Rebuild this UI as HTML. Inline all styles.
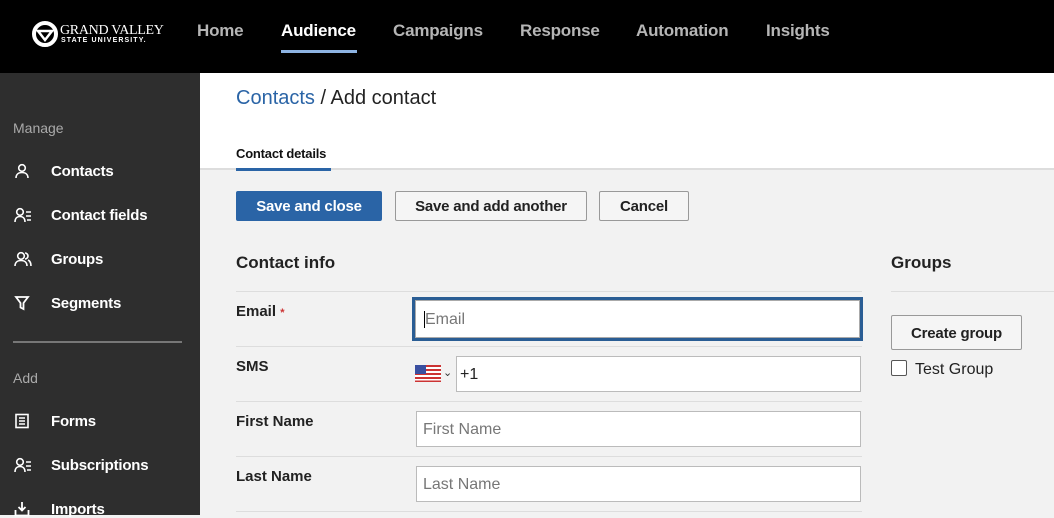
<!DOCTYPE html>
<html><head><style>
*{box-sizing:border-box;margin:0;padding:0}
body{width:1054px;height:515px;overflow:hidden;font-family:"Liberation Sans",sans-serif;background:#f2f2f2;position:relative}
.top{position:absolute;left:0;top:0;width:1054px;height:73px;background:#000}
.nav{position:absolute;top:21px;font-size:17px;font-weight:bold;color:#b5b5b5;letter-spacing:-0.2px}
.side{position:absolute;left:0;top:73px;width:200px;height:442px;background:#2e2e2e;color:#fff}
.sh{position:absolute;left:13px;font-size:14px;color:#aaa}
.si{position:absolute;left:51px;font-size:15px;font-weight:bold;color:#fff;letter-spacing:-0.2px}
.ic{position:absolute;left:14px}
.white{position:absolute;left:200px;top:73px;width:854px;height:97px;background:#fff;border-bottom:2px solid #ddd}
.btn{position:absolute;top:191px;height:30px;border:1px solid #999;border-radius:2px;background:#f5f5f5;font-size:15px;font-weight:bold;color:#222;text-align:center;line-height:30px;letter-spacing:-0.2px}
.lbl{position:absolute;left:236px;font-size:15px;font-weight:bold;color:#222}
.inp{position:absolute;left:416px;width:445px;height:36px;border:1px solid #bbb;background:#fff;font-size:16px;color:#777;padding-left:6px;line-height:36px}
.hr{position:absolute;left:236px;width:626px;height:1px;background:#ddd}
</style></head><body>
<div class="top">
<svg style="position:absolute;left:31px;top:20px" width="28" height="28" viewBox="0 0 28 28"><circle cx="14" cy="14" r="11" fill="none" stroke="#fff" stroke-width="4"/><path d="M7 11h14l-7 9z" fill="none" stroke="#fff" stroke-width="2.5"/></svg>
<div style="position:absolute;left:60px;top:24px;color:#fff;font-family:'Liberation Serif',serif;font-size:14px;line-height:13px;letter-spacing:-0.3px">GRAND VALLEY</div>
<div style="position:absolute;left:61px;top:37px;color:#fff;font-size:7px;letter-spacing:1.1px;font-weight:bold">STATE UNIVERSITY.</div>
<div class="nav" style="left:197px">Home</div>
<div class="nav" style="left:281px;color:#fff">Audience</div>
<div style="position:absolute;left:281px;top:50px;width:76px;height:3px;background:#8eb4e3"></div>
<div class="nav" style="left:393px">Campaigns</div>
<div class="nav" style="left:520px">Response</div>
<div class="nav" style="left:636px">Automation</div>
<div class="nav" style="left:766px">Insights</div>
</div>
<div class="side">
<div class="sh" style="top:47px">Manage</div>
<svg class="ic" style="top:90px" width="16" height="16" viewBox="0 0 16 16" fill="none" stroke="#fff" stroke-width="1.6"><circle cx="8" cy="5" r="3.3"/><path d="M2 15c0-4 3-5.5 6-5.5s6 1.5 6 5.5"/></svg>
<div class="si" style="top:90px">Contacts</div>
<svg class="ic" style="top:134px" width="18" height="16" viewBox="0 0 18 16" fill="none" stroke="#fff" stroke-width="1.6"><circle cx="6" cy="5" r="3.3"/><path d="M1 15c0-4 2.5-5.5 5-5.5s5 1.5 5 5.5M12 5h5M12 9h5M13 13h4"/></svg>
<div class="si" style="top:134px">Contact fields</div>
<svg class="ic" style="top:178px" width="18" height="16" viewBox="0 0 18 16" fill="none" stroke="#fff" stroke-width="1.6"><circle cx="7" cy="5" r="3.3"/><path d="M1 15c0-4 3-5.5 6-5.5s6 1.5 6 5.5M11 2a3 3 0 010 6M14 9c2 1 3 3 3 6"/></svg>
<div class="si" style="top:178px">Groups</div>
<svg class="ic" style="top:222px" width="16" height="16" viewBox="0 0 16 16" fill="none" stroke="#fff" stroke-width="1.8"><path d="M2 2h12L9.5 8v6l-3-1.5V8z"/></svg>
<div class="si" style="top:222px">Segments</div>
<div style="position:absolute;left:13px;top:268px;width:169px;height:2px;background:#777"></div>
<div class="sh" style="top:297px">Add</div>
<svg class="ic" style="top:340px" width="16" height="16" viewBox="0 0 16 16" fill="none" stroke="#fff" stroke-width="1.6"><rect x="2" y="1.5" width="12" height="13"/><path d="M5 5h6M5 8h6M5 11h6"/></svg>
<div class="si" style="top:340px">Forms</div>
<svg class="ic" style="top:384px" width="18" height="16" viewBox="0 0 18 16" fill="none" stroke="#fff" stroke-width="1.6"><circle cx="6" cy="5" r="3.3"/><path d="M1 15c0-4 2.5-5.5 5-5.5s5 1.5 5 5.5M12 5h5M12 9h5M13 13h4"/></svg>
<div class="si" style="top:384px">Subscriptions</div>
<svg class="ic" style="top:428px" width="16" height="16" viewBox="0 0 16 16" fill="none" stroke="#fff" stroke-width="1.8"><path d="M8 1v8M4.5 6L8 9.5 11.5 6M1.5 9v5.5h13V9"/></svg>
<div class="si" style="top:428px">Imports</div>
</div>
<div class="white">
<div style="position:absolute;left:36px;top:14px;font-size:20px;color:#222"><span style="color:#2a64a6">Contacts</span> / Add contact</div>
<div style="position:absolute;left:36px;top:73px;font-size:13px;font-weight:bold;color:#111;letter-spacing:-0.2px">Contact details</div>
<div style="position:absolute;left:36px;top:95px;width:95px;height:3px;background:#2a64a6"></div>
</div>
<div class="btn" style="left:236px;width:146px;background:#2a64a6;border-color:#2a64a6;color:#fff">Save and close</div>
<div class="btn" style="left:395px;width:192px">Save and add another</div>
<div class="btn" style="left:599px;width:90px">Cancel</div>
<div style="position:absolute;left:236px;top:253px;font-size:17px;font-weight:bold;color:#222">Contact info</div>
<div style="position:absolute;left:891px;top:253px;font-size:17px;font-weight:bold;color:#222">Groups</div>
<div class="hr" style="top:291px"></div>
<div style="position:absolute;left:891px;top:291px;width:163px;height:1px;background:#ddd"></div>
<div class="lbl" style="top:303px">Email <span style="color:#c33;font-size:11px">*</span></div>
<div class="inp" style="left:412px;top:297px;width:451px;height:44px;border:3px solid #2a5d94;padding:0;"><div style="border:1px solid #aaa;height:38px;padding-left:8px;line-height:38px"><span style="border-left:1px solid #000">Email</span></div></div>
<div class="hr" style="top:346px"></div>
<div class="lbl" style="top:358px">SMS</div>
<svg style="position:absolute;left:415px;top:365px" width="26" height="17" viewBox="0 0 26 17"><rect width="26" height="17" fill="#fff"/><g fill="#c33"><rect y="0" width="26" height="2"/><rect y="4" width="26" height="2"/><rect y="8" width="26" height="2"/><rect y="12" width="26" height="2"/><rect y="15.5" width="26" height="1.5"/></g><rect width="11" height="9" fill="#3a4fa0"/></svg>
<div style="position:absolute;left:443px;top:366px;font-size:11px;color:#333">⌄</div>
<div class="inp" style="left:456px;top:356px;width:405px;color:#222;padding-left:3px">+1</div>
<div class="hr" style="top:401px"></div>
<div class="lbl" style="top:413px">First Name</div>
<div class="inp" style="top:411px">First Name</div>
<div class="hr" style="top:456px"></div>
<div class="lbl" style="top:468px">Last Name</div>
<div class="inp" style="top:466px">Last Name</div>
<div class="hr" style="top:511px"></div>
<div class="btn" style="left:891px;top:315px;width:131px;height:35px;line-height:35px">Create group</div>
<div style="position:absolute;left:891px;top:360px;width:16px;height:16px;border:1px solid #555;border-radius:2px;background:#fff"></div>
<div style="position:absolute;left:915px;top:361px;font-size:16px;color:#222">Test Group</div>
</body></html>
